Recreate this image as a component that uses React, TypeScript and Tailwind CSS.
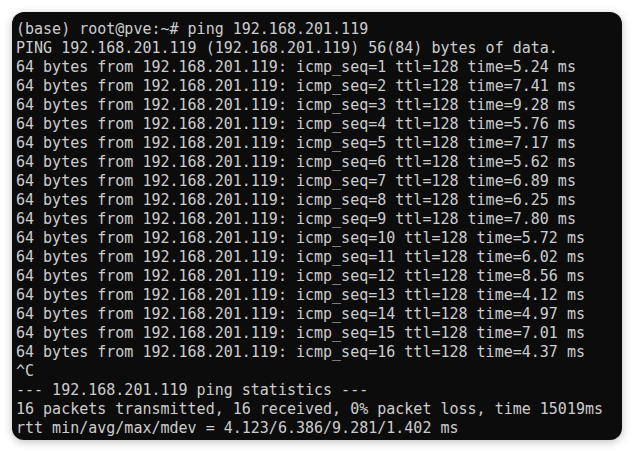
const seqs = [
  ["1", "5.24"],
  ["2", "7.41"],
  ["3", "9.28"],
  ["4", "5.76"],
  ["5", "7.17"],
  ["6", "5.62"],
  ["7", "6.89"],
  ["8", "6.25"],
  ["9", "7.80"],
  ["10", "5.72"],
  ["11", "6.02"],
  ["12", "8.56"],
  ["13", "4.12"],
  ["14", "4.97"],
  ["15", "7.01"],
  ["16", "4.37"],
];

const lines = [
  "(base) root@pve:~# ping 192.168.201.119",
  "PING 192.168.201.119 (192.168.201.119) 56(84) bytes of data.",
  ...seqs.map(([n, t]) => `64 bytes from 192.168.201.119: icmp_seq=${n} ttl=128 time=${t} ms`),
  "^C",
  "--- 192.168.201.119 ping statistics ---",
  "16 packets transmitted, 16 received, 0% packet loss, time 15019ms",
  "rtt min/avg/max/mdev = 4.123/6.386/9.281/1.402 ms",
  "(base) root@pve:~# ",
];

export default function App() {
  return (
    <div className="w-[634px] h-[453px] bg-white p-3">
      <div className="h-[428px] w-[610px] overflow-hidden rounded-xl bg-[#0c0c0c] pl-1 pt-2 shadow-[0_2px_8px_rgba(0,0,0,0.25)]">
        {lines.map((line, i) => (
          <div
            key={i}
            className="h-[19px] whitespace-pre text-[15px] leading-[19px] text-[#cccccc] font-['DejaVu_Sans_Mono',monospace]"
          >
            {line}
          </div>
        ))}
      </div>
    </div>
  );
}
